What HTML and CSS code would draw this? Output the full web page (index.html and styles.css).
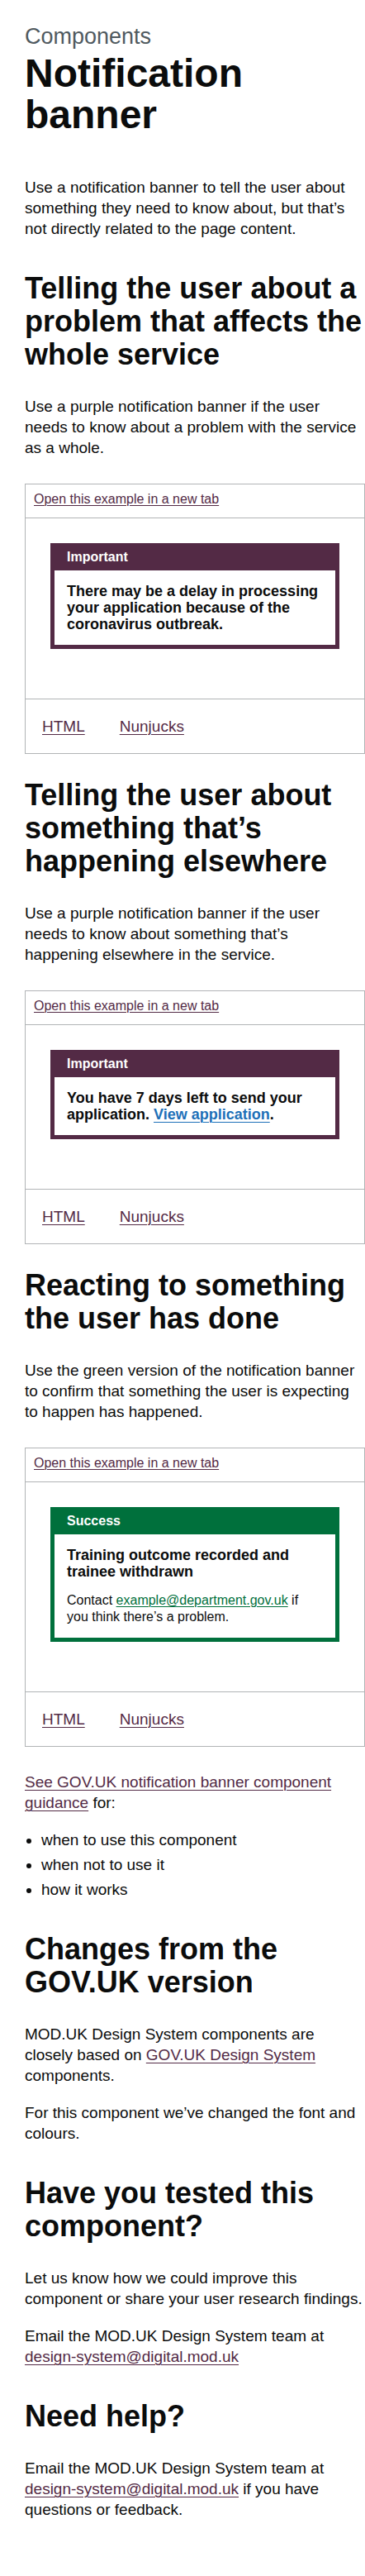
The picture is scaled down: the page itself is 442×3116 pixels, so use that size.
FILE: index.html
```html
<!DOCTYPE html>
<html lang="en">
<head>
<meta charset="utf-8">
<title>Notification banner – MOD.UK Design System</title>
<link rel="stylesheet" href="styles.css">
</head>
<body>
<main class="page">
  <span class="caption">Components</span>
  <h1 class="title">Notification banner</h1>
  <p class="body">Use a notification banner to tell the user about something they need to know about, but that’s not directly related to the page content.</p>

  <h2 class="heading">Telling the user about a problem that affects the whole service</h2>
  <p class="body">Use a purple notification banner if the user needs to know about a problem with the service as a whole.</p>

  <div class="example">
    <div class="example__header"><a class="example__link" href="#">Open this example in a new tab</a></div>
    <div class="example__preview">
      <div class="banner">
        <div class="banner__header"><h3 class="banner__title">Important</h3></div>
        <div class="banner__content">
          <p class="banner__heading">There may be a delay in processing your application because of the coronavirus outbreak.</p>
        </div>
      </div>
    </div>
    <div class="example__tabs">
      <a class="example__tab" href="#">HTML</a>
      <a class="example__tab" href="#">Nunjucks</a>
    </div>
  </div>

  <h2 class="heading heading--after-example">Telling the user about something that’s happening elsewhere</h2>
  <p class="body">Use a purple notification banner if the user needs to know about something that’s happening elsewhere in the service.</p>

  <div class="example">
    <div class="example__header"><a class="example__link" href="#">Open this example in a new tab</a></div>
    <div class="example__preview">
      <div class="banner">
        <div class="banner__header"><h3 class="banner__title">Important</h3></div>
        <div class="banner__content">
          <p class="banner__heading">You have 7 days left to send your application. <a class="banner__link" href="#">View application</a>.</p>
        </div>
      </div>
    </div>
    <div class="example__tabs">
      <a class="example__tab" href="#">HTML</a>
      <a class="example__tab" href="#">Nunjucks</a>
    </div>
  </div>

  <h2 class="heading heading--after-example">Reacting to something the user has done</h2>
  <p class="body">Use the green version of the notification banner to confirm that something the user is expecting to happen has happened.</p>

  <div class="example">
    <div class="example__header"><a class="example__link" href="#">Open this example in a new tab</a></div>
    <div class="example__preview">
      <div class="banner banner--success">
        <div class="banner__header"><h3 class="banner__title">Success</h3></div>
        <div class="banner__content">
          <h3 class="banner__heading">Training outcome recorded and trainee withdrawn</h3>
          <p class="banner__body">Contact <a class="banner__link banner__link--success" href="#">example@department.gov.uk</a> if you think there’s a problem.</p>
        </div>
      </div>
    </div>
    <div class="example__tabs">
      <a class="example__tab" href="#">HTML</a>
      <a class="example__tab" href="#">Nunjucks</a>
    </div>
  </div>

  <p class="body"><a class="link" href="#">See GOV.UK notification banner component guidance</a> for:</p>
  <ul class="list">
    <li>when to use this component</li>
    <li>when not to use it</li>
    <li>how it works</li>
  </ul>

  <h2 class="heading">Changes from the GOV.UK version</h2>
  <p class="body">MOD.UK Design System components are closely based on <a class="link" href="#">GOV.UK Design System</a> components.</p>
  <p class="body">For this component we’ve changed the font and colours.</p>

  <h2 class="heading">Have you tested this component?</h2>
  <p class="body">Let us know how we could improve this component or share your user research findings.</p>
  <p class="body">Email the MOD.UK Design System team at <a class="link" href="#">design-system@digital.mod.uk</a></p>

  <h2 class="heading">Need help?</h2>
  <p class="body">Email the MOD.UK Design System team at <a class="link" href="#">design-system@digital.mod.uk</a> if you have questions or feedback.</p>
</main>
</body>
</html>
```

FILE: styles.css
```css
html {
  background: #ffffff;
}

body {
  margin: 0;
  font-family: "Liberation Sans", Arial, sans-serif;
  color: #0b0c0c;
  background: #ffffff;
}

.page {
  width: 412px;
  padding: 29px 0 60px 30px;
}

.caption {
  display: block;
  font-size: 27px;
  line-height: 30px;
  color: #505a5f;
  margin: 0 0 5px;
}

.title {
  font-size: 48px;
  line-height: 50px;
  font-weight: 700;
  margin: 0 0 50px;
}

.body {
  font-size: 19px;
  line-height: 25px;
  margin: 0 0 20px;
}

.heading {
  font-size: 36px;
  line-height: 40px;
  font-weight: 700;
  margin: 40px 0 30px;
}

.heading--after-example {
  margin-top: 29px;
}

.link,
.example__link,
.example__tab {
  color: #532a45;
  text-decoration: underline;
  text-decoration-thickness: 1px;
  text-underline-offset: 0.15em;
}

.list {
  font-size: 19px;
  line-height: 25px;
  margin: 0 0 20px;
  padding-left: 20px;
}

.list li {
  margin-bottom: 5px;
}

/* Example frame */
.example {
  border: 1px solid #b1b4b6;
  margin: 31px 0 30px;
}

.example__header {
  padding: 8px 10px 12px;
  border-bottom: 1px solid #b1b4b6;
}

.example__link {
  font-size: 16px;
  line-height: 20px;
}

.example__preview {
  padding: 30px 30px 30px;
  border-bottom: 1px solid #b1b4b6;
}

.example__tabs {
  display: flex;
  gap: 42px;
  padding: 20px;
  font-size: 19px;
  line-height: 25px;
}

/* Notification banner */
.banner {
  border: 5px solid #532a45;
  background: #532a45;
  margin-bottom: 30px;
}

.banner--success {
  border-color: #00703c;
  background: #00703c;
}

.banner__header {
  padding: 2px 15px 5px;
  border-bottom: 1px solid transparent;
}

.banner__title {
  margin: 0;
  font-size: 16px;
  line-height: 20px;
  font-weight: 700;
  color: #ffffff;
}

.banner__content {
  background: #ffffff;
  padding: 15px;
}

.banner__heading {
  margin: 0 0 15px;
  font-size: 18px;
  line-height: 20px;
  font-weight: 700;
}

.banner__content > :last-child {
  margin-bottom: 0;
}

.banner__body {
  margin: 0;
  font-size: 16px;
  line-height: 20px;
}

.banner__link {
  color: #1d70b8;
  text-decoration: underline;
  text-decoration-thickness: 1px;
  text-underline-offset: 0.15em;
}

.banner__link--success {
  color: #00703c;
}
```
